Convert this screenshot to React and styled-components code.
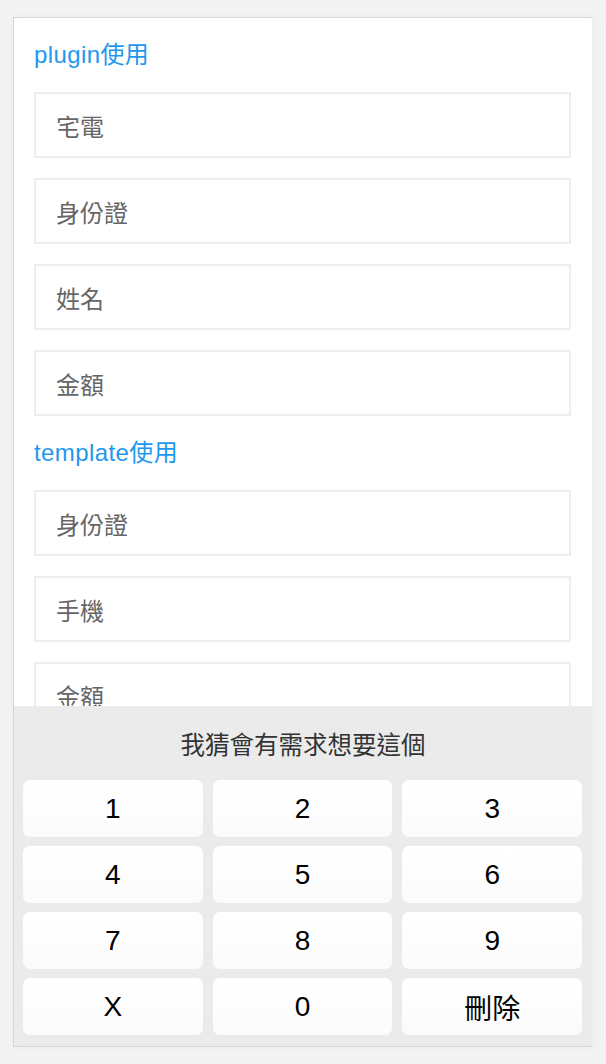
import React from "react";
import styled, { createGlobalStyle } from "styled-components";

const Global = createGlobalStyle`
  html, body { margin: 0; padding: 0; background: #f3f3f3; }
  body { font-family: "Liberation Sans", "Noto Sans CJK TC", sans-serif; }
`;

const Stage = styled.div`
  padding: 17px 0 0 13px;
  height: 1064px;
  box-sizing: border-box;
`;

const Device = styled.div`
  position: relative;
  width: 579px;
  height: 1030px;
  box-sizing: border-box;
  background: #fff;
  border: 1px solid #d6d6d6;
  border-right: none;
  overflow: hidden;
  box-shadow: 2px 0 10px rgba(0, 0, 0, 0.04);
`;

const Content = styled.div`
  padding: 20px 21px 0 20px;
`;

const SectionLabel = styled.div`
  margin-bottom: 20px;
  height: 34px;
  line-height: 34px;
  font-size: 24px;
  letter-spacing: 0.4px;
  color: #1e98ef;
  font-family: "Liberation Sans", "Noto Sans CJK TC", sans-serif;
`;

const Field = styled.div`
  height: 66px;
  box-sizing: border-box;
  border: 2px solid #eeeeee;
  margin-bottom: 20px;
  display: flex;
  align-items: center;
  padding-left: 20px;
  font-size: 24px;
  color: #666;
  font-family: "Noto Sans CJK TC", sans-serif;
`;

const Keyboard = styled.div`
  position: absolute;
  left: 0;
  right: 0;
  bottom: 0;
  height: 340px;
  background: #ebebeb;
  display: flex;
  flex-direction: column;
`;

const KeyboardTitle = styled.div`
  height: 74px;
  display: flex;
  align-items: center;
  justify-content: center;
  font-size: 24.5px;
  color: #333;
  font-family: "Noto Sans CJK TC", sans-serif;
`;

const KeyGrid = styled.div`
  display: grid;
  grid-template-columns: repeat(3, 1fr);
  grid-auto-rows: 57px;
  gap: 9px 10px;
  padding: 0 10px 11px 9px;
`;

const Key = styled.button`
  border: none;
  border-radius: 7px;
  background: linear-gradient(#ffffff, #fbfbfb);
  color: #000;
  font-size: 28px;
  font-family: ${(p) =>
    p.$cjk ? '"Noto Sans CJK TC", sans-serif' : '"Liberation Sans", sans-serif'};
  padding: 0;
  display: flex;
  align-items: center;
  justify-content: center;
  cursor: pointer;
`;

const pluginFields = ["宅電", "身份證", "姓名", "金額"];
const templateFields = ["身份證", "手機", "金額"];
const keys = ["1", "2", "3", "4", "5", "6", "7", "8", "9", "X", "0", "刪除"];

export default function App() {
  return (
    <>
      <Global />
      <Stage>
        <Device>
          <Content>
            <SectionLabel>plugin使用</SectionLabel>
            {pluginFields.map((f, i) => (
              <Field key={"p" + i}>{f}</Field>
            ))}
            <SectionLabel>template使用</SectionLabel>
            {templateFields.map((f, i) => (
              <Field key={"t" + i}>{f}</Field>
            ))}
          </Content>
          <Keyboard>
            <KeyboardTitle>我猜會有需求想要這個</KeyboardTitle>
            <KeyGrid>
              {keys.map((k) => (
                <Key key={k} $cjk={k === "刪除"}>
                  {k}
                </Key>
              ))}
            </KeyGrid>
          </Keyboard>
        </Device>
      </Stage>
    </>
  );
}
